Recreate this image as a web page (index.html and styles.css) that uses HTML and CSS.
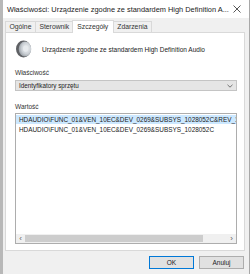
FILE: index.html
```html
<!DOCTYPE html>
<html lang="pl">
<head>
    <meta charset="UTF-8">
    <meta name="viewport" content="width=device-width, initial-scale=1.0">
    <title>Właściwości</title>
    <link rel="stylesheet" href="styles.css">
</head>
<body>
    <div class="window">
        <div class="titlebar">
            <span class="title">Właściwości: Urządzenie zgodne ze standardem High Definition A...</span>
            <svg class="close" width="8" height="8" viewBox="0 0 8 8">
                <path d="M0.5 0.5 L7.5 7.5 M7.5 0.5 L0.5 7.5" stroke="#444" stroke-width="0.9" fill="none"/>
            </svg>
        </div>

        <div class="content">
            <div class="tabs">
                <div class="tab">Ogólne</div>
                <div class="tab">Sterownik</div>
                <div class="tab active">Szczegóły</div>
                <div class="tab">Zdarzenia</div>
            </div>

            <div class="panel">
                <div class="device">
                    <svg class="device-icon" width="18" height="18" viewBox="0 0 18 18">
                        <defs>
                            <radialGradient id="face" cx="0.6" cy="0.45" r="0.6">
                                <stop offset="0" stop-color="#f2f4f6"/>
                                <stop offset="0.6" stop-color="#cdd2d7"/>
                                <stop offset="1" stop-color="#9aa0a6"/>
                            </radialGradient>
                        </defs>
                        <ellipse cx="8.5" cy="9" rx="7.5" ry="8.5" fill="#5e6064"/>
                        <ellipse cx="10" cy="9" rx="6.3" ry="7.6" fill="url(#face)"/>
                        <ellipse cx="10.6" cy="8.6" rx="2.6" ry="3.2" fill="#e8ebee"/>
                    </svg>
                    <span>Urządzenie zgodne ze standardem High Definition Audio</span>
                </div>

                <div class="label">Właściwość</div>
                <div class="select">
                    <span>Identyfikatory sprzętu</span>
                    <svg width="6" height="4" viewBox="0 0 6 4">
                        <path d="M0.5 0.8 L3 3.2 L5.5 0.8" stroke="#555" stroke-width="0.8" fill="none"/>
                    </svg>
                </div>

                <div class="label value-label">Wartość</div>
                <div class="list">
                    <div class="rows">
                        <div class="row selected">HDAUDIO\FUNC_01&amp;VEN_10EC&amp;DEV_0269&amp;SUBSYS_1028052C&amp;REV_1001</div>
                        <div class="row">HDAUDIO\FUNC_01&amp;VEN_10EC&amp;DEV_0269&amp;SUBSYS_1028052C</div>
                    </div>
                    <div class="hscroll">
                        <span class="arrow">‹</span>
                        <div class="track"><div class="thumb"></div></div>
                        <span class="arrow">›</span>
                    </div>
                </div>
            </div>

            <div class="buttons">
                <div class="btn default">OK</div>
                <div class="btn">Anuluj</div>
            </div>
        </div>
    </div>
</body>
</html>
```

FILE: styles.css
```css
body {
    margin: 0;
    padding: 0;
    background: #f0f0f0;
    font-family: 'Liberation Sans', Arial, sans-serif;
    color: #1a1a1a;
}

.window {
    width: 250px;
    height: 274px;
    box-sizing: border-box;
    border-left: 3px solid #b8b8b8;
    border-right: 1px solid #a8a8a8;
    background: #f0f0f0;
    display: flex;
    flex-direction: column;
}

.titlebar {
    height: 18px;
    background: #ffffff;
    display: flex;
    align-items: center;
    justify-content: space-between;
    padding: 0 8px 0 4px;
    font-size: 7.4px;
    color: #222;
}

.content {
    flex: 1;
    display: flex;
    flex-direction: column;
    padding: 2px 4px 0 2px;
}

.tabs {
    display: flex;
    height: 12px;
    align-items: flex-end;
    position: relative;
    z-index: 1;
}

.tab {
    font-size: 6.8px;
    height: 10px;
    line-height: 10px;
    padding: 0 3.5px;
    border: 1px solid #d9d9d9;
    border-bottom: none;
    margin-right: -1px;
    background: #f0f0f0;
    color: #333;
}

.tab.active {
    height: 12px;
    line-height: 12px;
    background: #ffffff;
    margin: 0 -1px 0 -1px;
    padding: 0 4.5px;
    position: relative;
    top: 1px;
}

.panel {
    height: 219px;
    box-sizing: border-box;
    background: #ffffff;
    border: 1px solid #d9d9d9;
    padding: 7px 7px 6px 9px;
    display: flex;
    flex-direction: column;
}

.device {
    display: flex;
    align-items: center;
    gap: 9px;
    font-size: 6.5px;
    color: #222;
    height: 18px;
}

.label {
    font-size: 6.5px;
    color: #333;
    margin-top: 10px;
    height: 9px;
    line-height: 9px;
}

.value-label {
    margin-top: 11px;
}

.select {
    margin-top: 3px;
    height: 11px;
    box-sizing: border-box;
    border: 1px solid #c4c4c4;
    background: #e5e5e5;
    display: flex;
    align-items: center;
    justify-content: space-between;
    padding: 0 3px 0 3px;
    font-size: 6.3px;
    color: #222;
}

.list {
    margin-top: 2px;
    flex: 1;
    border: 1px solid #adadad;
    display: flex;
    flex-direction: column;
    overflow: hidden;
}

.rows {
    flex: 1;
    padding-top: 1px;
    overflow: hidden;
}

.row {
    font-size: 6.4px;
    height: 9px;
    line-height: 9px;
    padding-left: 3px;
    white-space: nowrap;
    color: #222;
    margin-bottom: 1px;
}

.row.selected {
    background: #cce8ff;
}

.hscroll {
    height: 9px;
    display: flex;
    align-items: center;
    background: #f0f0f0;
}

.arrow {
    width: 9px;
    font-size: 8px;
    line-height: 9px;
    text-align: center;
    color: #606060;
}

.track {
    flex: 1;
    height: 9px;
    display: flex;
    align-items: center;
}

.thumb {
    width: 178px;
    height: 7px;
    background: #cdcdcd;
}

.buttons {
    display: flex;
    justify-content: flex-end;
    gap: 5px;
    margin-top: 5px;
    padding-right: 1px;
}

.btn {
    width: 45px;
    height: 13px;
    box-sizing: border-box;
    border: 1px solid #adadad;
    background: #e1e1e1;
    font-size: 6.5px;
    line-height: 11px;
    text-align: center;
    color: #222;
}

.btn.default {
    border-color: #0078d7;
}
```
